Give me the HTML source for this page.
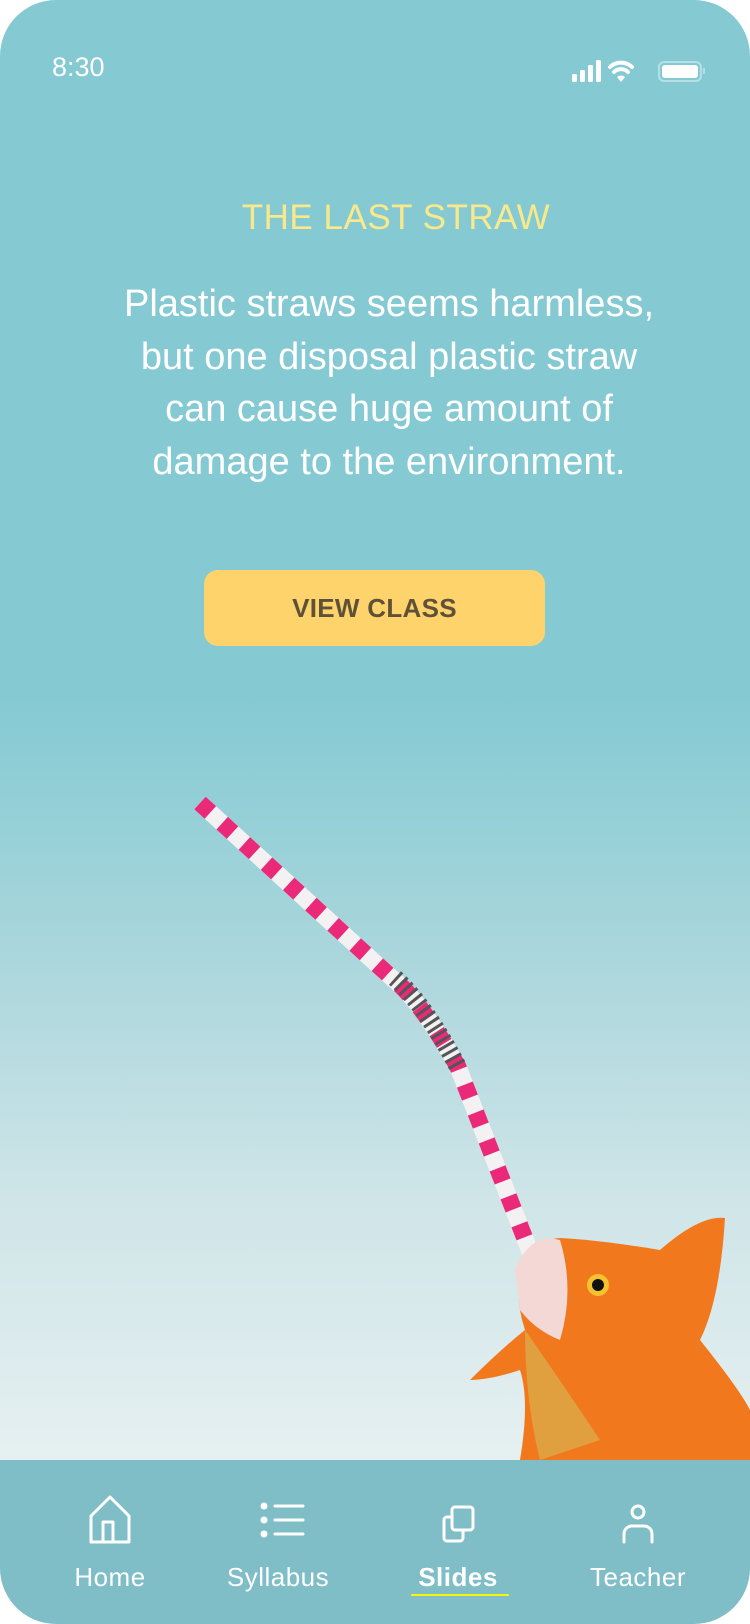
<!DOCTYPE html>
<html><head><meta charset="utf-8"><style>
*{margin:0;padding:0;box-sizing:border-box}
body{width:750px;height:1624px;background:#fff;font-family:"Liberation Sans",sans-serif;overflow:hidden;position:relative}
.scr{position:absolute;left:0;top:0;width:750px;height:1624px;border-radius:56px;overflow:hidden;background:linear-gradient(#85cad3 0px,#85cad3 700px,#a9d6dc 950px,#cfe5e8 1200px,#e6f0f1 1460px)}
.t{position:absolute;color:#fff}
.nav{position:absolute;left:0;top:1460px;width:750px;height:164px;background:#7fbec7}
.lbl{position:absolute;top:1562px;color:#fff;font-size:26px;text-align:center;width:160px;letter-spacing:0.5px}
</style></head><body><div class="scr">
<div class="t" style="left:52px;top:52px;font-size:27px">8:30</div>
<svg style="position:absolute;left:570px;top:58px" width="136" height="28" viewBox="0 0 136 28">
<rect x="2" y="16" width="5" height="8" rx="1.5" fill="#fff"/><rect x="10" y="12" width="5" height="12" rx="1.5" fill="#fff"/><rect x="18" y="7" width="5" height="17" rx="1.5" fill="#fff"/><rect x="26" y="2" width="5" height="22" rx="1.5" fill="#fff"/>
<path d="M40 9a16 16 0 0 1 22 0M44 14a10 10 0 0 1 14 0" stroke="#fff" stroke-width="4" fill="none" stroke-linecap="round"/><path d="M47 19l4 5 4-5a6 6 0 0 0-8 0z" fill="#fff"/>
<rect x="89" y="4" width="42" height="19" rx="5" fill="none" stroke="#b5e0e6" stroke-width="2"/><rect x="92" y="7" width="36" height="13" rx="3" fill="#fff"/><rect x="133" y="10" width="2" height="6" fill="#b5e0e6"/>
</svg>
<div class="t" style="left:21px;width:750px;top:198px;text-align:center;font-size:35px;color:#f9e98b;letter-spacing:0.5px">THE LAST STRAW</div>
<div class="t" style="left:14px;width:750px;top:278px;text-align:center;font-size:38px;line-height:52.5px">Plastic straws seems harmless,<br>but one disposal plastic straw<br>can cause huge amount of<br>damage to the environment.</div>
<div style="position:absolute;left:204px;top:570px;width:341px;height:76px;border-radius:14px;background:#fed36c;color:#5e5138;font-size:26px;font-weight:bold;text-align:center;line-height:76px;letter-spacing:0.3px">VIEW CLASS</div>
<svg style="position:absolute;left:0;top:780px" width="750" height="680" viewBox="0 780 750 680">
<path d="M200 803 L393 979 Q420 1000 458 1067 L545 1290" stroke="#f4f1f2" stroke-width="17" fill="none"/>
<path d="M200 803 L393 979 Q420 1000 458 1067 L545 1290" stroke="#ea2a78" stroke-width="17" fill="none" stroke-dasharray="14 16"/>
<path d="M395 978 Q425 1005 458 1067" stroke="#555" stroke-width="18" fill="none" stroke-dasharray="3 4"/>
<path d="M660 1250 Q700 1215 725 1218 Q720 1300 700 1340 Q740 1390 750 1410 L750 1460 L520 1460 Q530 1400 520 1370 Q490 1380 470 1380 Q500 1350 525 1330 Q515 1300 520 1270 Q530 1240 560 1238 Q600 1240 660 1250z" fill="#f2781e"/>
<path d="M515 1270 Q530 1232 560 1240 Q575 1290 560 1340 Q535 1330 520 1310z" fill="#f3d8d6"/>
<path d="M525 1330 Q560 1380 600 1440 L540 1460 Q525 1400 525 1330z" fill="#e0a040"/>
<circle cx="598" cy="1285" r="11" fill="#f5c230"/><circle cx="598" cy="1285" r="6" fill="#111"/>
</svg>
<div class="nav"></div>
<svg style="position:absolute;left:0;top:1490px" width="750" height="60" viewBox="0 0 750 60" fill="none" stroke="#fff" stroke-width="3" stroke-linecap="round" stroke-linejoin="round">
<path d="M91 52V26l19-19 19 19v26z"/><path d="M103 52V32h10v20"/>
<circle cx="264" cy="16" r="2" fill="#fff"/><circle cx="264" cy="30" r="2" fill="#fff"/><circle cx="264" cy="44" r="2" fill="#fff"/><path d="M275 16h28M275 30h28M275 44h28"/>
<rect x="452" y="17" width="21" height="23" rx="3"/><path d="M452 27h-5a3 3 0 0 0-3 3v18a3 3 0 0 0 3 3h13a3 3 0 0 0 3-3v-8"/>
<circle cx="638" cy="22" r="6"/><path d="M624 52V44a8 8 0 0 1 8-8h12a8 8 0 0 1 8 8v8"/>
</svg>
<div class="lbl" style="left:30px">Home</div>
<div class="lbl" style="left:198px">Syllabus</div>
<div class="lbl" style="left:378px;font-weight:bold">Slides</div>
<div style="position:absolute;left:411px;top:1594px;width:98px;height:2px;background:#f5f50a"></div>
<div class="lbl" style="left:558px">Teacher</div>
</div></body></html>
